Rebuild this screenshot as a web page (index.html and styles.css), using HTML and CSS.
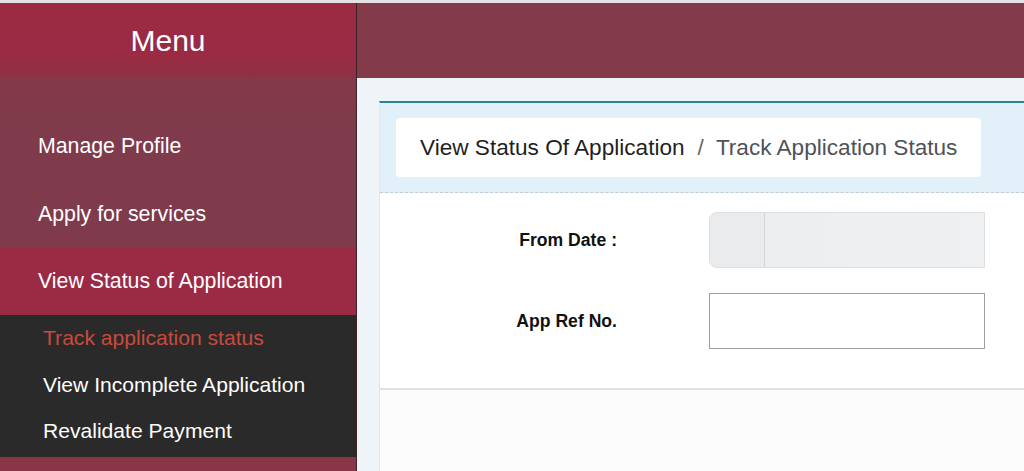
FILE: index.html
```html
<!DOCTYPE html>
<html lang="en">
    <head>
        <meta charset="UTF-8" />
        <title>Track Application Status</title>
        <link rel="stylesheet" href="styles.css">
    </head>
    <body>
        <div class="page">
            <!-- Side menu -->
            <aside class="sidebar">
                <div class="menu-title">Menu</div>
                <ul class="nav">
                    <li class="nav-item"><a href="#">Manage Profile</a></li>
                    <li class="nav-item"><a href="#">Apply for services</a></li>
                    <li class="nav-item active">
                        <a href="#">View Status of Application</a>
                        <ul class="subnav">
                            <li class="current"><a href="#">Track application status</a></li>
                            <li><a href="#">View Incomplete Application</a></li>
                            <li><a href="#">Revalidate Payment</a></li>
                        </ul>
                    </li>
                </ul>
            </aside>

            <!-- Main area -->
            <main class="main">
                <div class="topbar"></div>
                <div class="content">
                    <div class="panel">
                        <div class="panel-head">
                            <div class="crumbs">
                                <span class="crumb">View Status Of Application</span>
                                <span class="crumb-sep">/</span>
                                <span class="crumb crumb-current">Track Application Status</span>
                            </div>
                        </div>
                        <div class="panel-body">
                            <form class="status-form">
                                <label class="form-label" for="fromDate">From Date :</label>
                                <div class="date-input">
                                    <span class="date-addon"></span>
                                    <input type="text" id="fromDate" disabled />
                                </div>

                                <label class="form-label" for="appRef">App Ref No.</label>
                                <input type="text" id="appRef" class="text-input" />
                            </form>
                        </div>
                        <div class="panel-foot"></div>
                    </div>
                </div>
            </main>
        </div>
    </body>
</html>
```

FILE: styles.css
```css
/* --- Basic Reset --- */
* {
  margin: 0;
  padding: 0;
  box-sizing: border-box;
  font-family: "Liberation Sans", Arial, sans-serif;
}

html,
body {
  height: 100%;
}

body {
  background-color: #fff;
  overflow: hidden;
}

.page {
  display: flex;
  height: 100%;
  border-top: 3px solid #e6e2e3;
}

/* --- Sidebar --- */
.sidebar {
  width: 357px;
  flex-shrink: 0;
  background-color: #8a3448;
  border-right: 1px solid #3a2228;
  color: #fff;
}

.menu-title {
  height: 75px;
  padding-right: 20px;
  display: flex;
  align-items: center;
  justify-content: center;
  font-size: 30px;
  background: linear-gradient(to bottom, #9c2a43 0%, #9a2b43 70%, #8e3246 100%);
}

.nav {
  list-style: none;
  padding-top: 34px;
  background: linear-gradient(to bottom, #843849 0px, #7f3b4b 40px);
}

.nav-item > a {
  display: flex;
  align-items: center;
  height: 68px;
  padding-left: 38px;
  color: #fff;
  text-decoration: none;
  font-size: 21.3px;
}

.nav-item.active > a {
  background-color: #9b2a44;
  height: 67px;
}

.subnav {
  list-style: none;
  background-color: #2b2a2b;
  padding-bottom: 2px;
}

.subnav li a {
  display: flex;
  align-items: center;
  height: 46.5px;
  padding-left: 43px;
  color: #fff;
  text-decoration: none;
  font-size: 21.1px;
}

.subnav li.current a {
  color: #c94a3c;
}

/* --- Main area --- */
.main {
  flex: 1;
  display: flex;
  flex-direction: column;
  min-width: 0;
}

.topbar {
  height: 75px;
  background-color: #833a4b;
}

.content {
  flex: 1;
  display: flex;
  padding: 23px 0 0 22px;
  background-color: #eff4f8;
  overflow: hidden;
}

.panel {
  flex: 1;
  display: flex;
  flex-direction: column;
  margin-right: -20px;
  border-top: 2px solid #27869b;
  border-left: 1px solid #e3e7ea;
  background-color: #fcfcfc;
}

.panel-head {
  padding: 15px 16px;
  background-color: #e2f0fa;
  border-bottom: 1px dashed #c3c9cf;
}

.crumbs {
  display: inline-flex;
  align-items: center;
  height: 59px;
  padding: 0 24px;
  background-color: #fff;
  border-radius: 4px;
  font-size: 22.6px;
}

.crumb {
  color: #1f1f1f;
}

.crumb-sep {
  margin: 0 12px 0 13px;
  color: #666;
}

.crumb-current {
  color: #4f5257;
}

.panel-body {
  padding: 19px 0 39px;
  background-color: #fff;
  border-bottom: 2px solid #dfe1e3;
}

.panel-foot {
  flex: 1;
  background-color: #fcfcfc;
}

.status-form {
  display: grid;
  grid-template-columns: 237px 276px;
  column-gap: 92px;
  row-gap: 25px;
  align-items: center;
}

.form-label {
  text-align: right;
  font-size: 17.6px;
  font-weight: bold;
  color: #111;
}

.date-input {
  display: flex;
  height: 56px;
  border: 1px solid #dcdee0;
  border-radius: 8px 0 0 8px;
  background-color: #eceef0;
  overflow: hidden;
}

.date-addon {
  width: 55px;
  border-right: 1px solid #d3d6d9;
  background-color: #e9ebed;
}

.date-input input {
  flex: 1;
  border: none;
  background: linear-gradient(to right, #eceef0, #eef0f2);
}

.text-input {
  height: 56px;
  border: 1px solid #9d9d9d;
  background-color: #fff;
  font-size: 18px;
  padding: 0 10px;
}
```
